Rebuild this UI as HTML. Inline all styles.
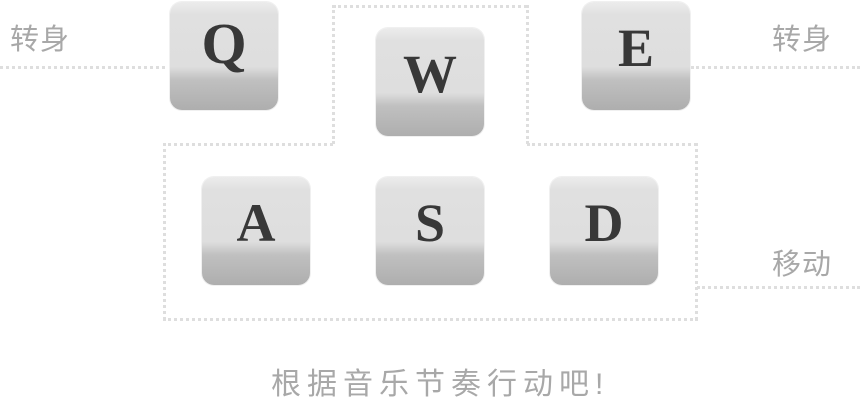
<!DOCTYPE html>
<html><head><meta charset="utf-8"><style>
body{margin:0;width:860px;height:402px;background:#fff;position:relative;overflow:hidden;font-family:"Liberation Sans","Noto Sans CJK SC",sans-serif}
.k{position:absolute;width:108px;height:108px;border-radius:12px;background:linear-gradient(#ececec 0%,#e0e0e0 12%,#dedede 60%,#c0c0c0 72%,#aeaeae 100%);box-shadow:0 0 0 1px #f0f0f0;}
.k span{position:absolute;left:0;right:0;top:10px;text-align:center;font-family:"Liberation Serif",serif;font-weight:bold;font-size:58px;color:#383838;line-height:60px}
.h{position:absolute;border-top:3px dotted #dedede;height:0}
.v{position:absolute;border-left:3px dotted #dedede;width:0}
.t{position:absolute;color:#a8a8a8;font-size:29px;line-height:30px;letter-spacing:1px}
</style></head><body>
<div class="h" style="left:0;top:66px;width:165px"></div>
<div class="h" style="left:691px;top:66px;width:169px"></div>
<div class="h" style="left:697px;top:286px;width:163px"></div>
<div class="h" style="left:333px;top:5px;width:194px"></div>
<div class="v" style="left:332px;top:5px;height:139px"></div>
<div class="v" style="left:526px;top:5px;height:139px"></div>
<div class="h" style="left:163px;top:143px;width:170px"></div>
<div class="h" style="left:527px;top:143px;width:170px"></div>
<div class="v" style="left:163px;top:143px;height:177px"></div>
<div class="v" style="left:695px;top:143px;height:177px"></div>
<div class="h" style="left:163px;top:318px;width:535px"></div>
<div class="k" style="left:170px;top:2px"><span style="top:12px">Q</span></div>
<div class="k" style="left:376px;top:28px"><span style="top:16px;font-size:54px">W</span></div>
<div class="k" style="left:582px;top:2px"><span style="top:16px;font-size:54px">E</span></div>
<div class="k" style="left:202px;top:177px"><span style="top:16px;font-size:54px">A</span></div>
<div class="k" style="left:376px;top:177px"><span style="top:16px;font-size:54px">S</span></div>
<div class="k" style="left:550px;top:177px"><span style="top:16px;font-size:54px">D</span></div>
<div class="t" style="left:10px;top:25px">转身</div>
<div class="t" style="left:772px;top:25px">转身</div>
<div class="t" style="left:772px;top:250px">移动</div>
<div class="t" style="left:271px;top:370px;font-size:30px;letter-spacing:6px">根据音乐节奏行动吧!</div>
</body></html>
